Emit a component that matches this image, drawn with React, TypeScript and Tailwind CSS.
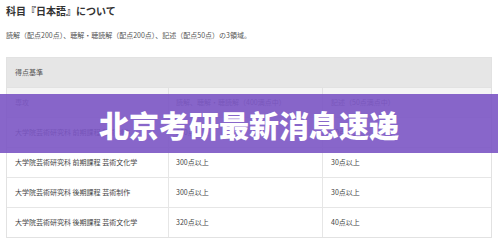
const jp = "font-['Noto_Sans_CJK_JP','Noto_Sans',sans-serif]";

const rows = [
  ["大学院芸術研究科 前期課程 芸術制作", "300点以上", "30点以上"],
  ["大学院芸術研究科 前期課程 芸術文化学", "300点以上", "30点以上"],
  ["大学院芸術研究科 後期課程 芸術制作", "300点以上", "30点以上"],
  ["大学院芸術研究科 後期課程 芸術文化学", "320点以上", "40点以上"],
];

export default function App() {
  return (
    <div className={`relative w-[498px] h-[246px] overflow-hidden bg-white ${jp}`}>
      {/* Article body */}
      <div className="px-[6px] pt-[4px]">
        <h2 className="text-[10px] leading-[14px] font-bold text-[#333]">科目『日本語』について</h2>
        <p className="mt-[11px] text-[7px] leading-[12px] text-[#555]">
          読解（配点200点）、聴解・聴読解（配点200点）、記述（配点50点）の3領域。
        </p>

        {/* Score table */}
        <div className="mt-[16px] w-[486px] border border-[#e2e2e2]">
          <div className="h-[29px] bg-[#e6e6e6] flex items-center px-[8px] text-[7px] text-[#555]">
            得点基準
          </div>
          <div className="grid grid-cols-[162px_154px_1fr] h-[30px] bg-[#f4f4f4] border-t border-[#e2e2e2] text-[7px] text-[#666]">
            <div className="flex items-center px-[8px] border-r border-[#e2e2e2]">専攻</div>
            <div className="flex items-center px-[7px] border-r border-[#e2e2e2]">読解、聴解・聴読解（400満点中）</div>
            <div className="flex items-center px-[8px]">記述（50点満点中）</div>
          </div>
          {rows.map((r, i) => (
            <div
              key={i}
              className="grid grid-cols-[162px_154px_1fr] h-[30px] border-t border-[#e6e6e6] text-[7px] text-[#444]"
            >
              <div className="flex items-center px-[8px] border-r border-[#e6e6e6]">{r[0]}</div>
              <div className="flex items-center px-[7px] border-r border-[#e6e6e6]">{r[1]}</div>
              <div className="flex items-center px-[8px]">{r[2]}</div>
            </div>
          ))}
        </div>
      </div>

      {/* Headline banner over the content */}
      <div className="absolute left-0 right-0 top-[94px] h-[59px] bg-[#7b55c4]/90 flex items-center justify-center">
        <span className="text-[30px] leading-none font-black text-white font-['Noto_Sans_CJK_SC',sans-serif]">
          北京考研最新消息速递
        </span>
      </div>
    </div>
  );
}
